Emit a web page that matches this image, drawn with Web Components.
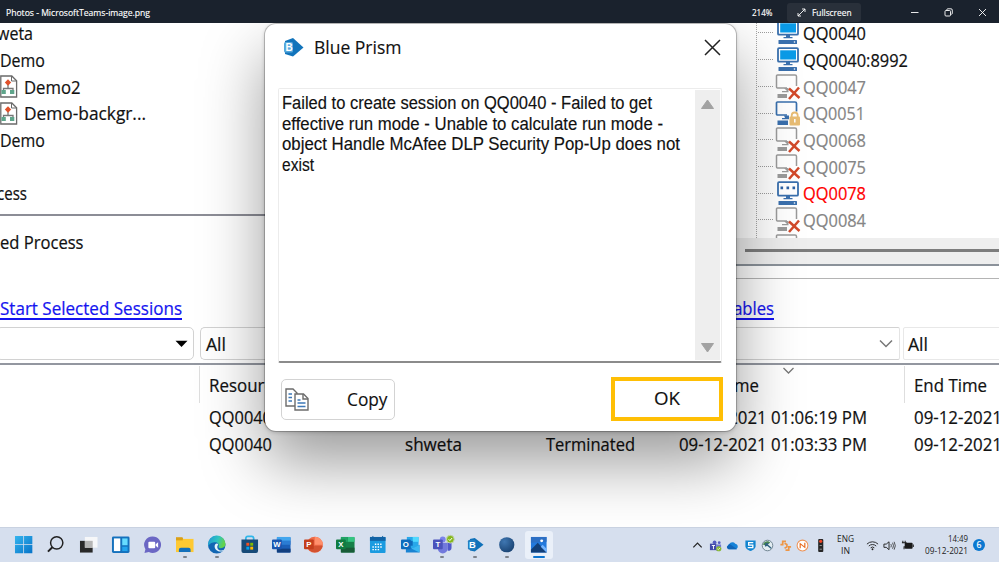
<!DOCTYPE html>
<html lang="en">
<head>
<meta charset="utf-8">
<title>Photos - MicrosoftTeams-image.png</title>
<style>
    body {
        margin: 0;
        width: 999px;
        height: 562px;
        overflow: hidden;
        background: #fff;
        font-family: "Open Sans", "Noto Sans", sans-serif;
        color: #111;
    }
</style>
</head>
<body>
<photos-app></photos-app>

<script>
// Text squeezed or stretched to the width given in "w"
class FitText extends HTMLElement {
    constructor() {
        super();
        this.attachShadow({ mode: 'open' });
    }

    connectedCallback() {
        const w = parseFloat(this.getAttribute('w'));
        this.shadowRoot.innerHTML = `
            <style>
                :host { display: block; width: ${w}px; white-space: nowrap; flex: none; }
                span { display: inline-block; transform-origin: 0 50%; text-decoration: inherit; }
            </style>
            <span><slot></slot></span>
        `;
        const span = this.shadowRoot.querySelector('span');
        const natural = span.getBoundingClientRect().width;
        if (natural) {
            span.style.transform = `scaleX(${w / natural})`;
        }
    }
}

class TitleBar extends HTMLElement {
    constructor() {
        super();
        this.attachShadow({ mode: 'open' });
    }

    connectedCallback() {
        this.shadowRoot.innerHTML = `
            <style>
                :host {
                    display: flex;
                    align-items: center;
                    height: 23px;
                    box-sizing: border-box;
                    padding: 2px 12px 0 6px;
                    background: #1a222d;
                    color: #fff;
                    font-size: 8.8px;
                    line-height: 20px;
                    -webkit-text-stroke: .15px;
                }
                .grow { flex: 1; }
                .full {
                    display: flex;
                    align-items: center;
                    gap: 6px;
                    width: 74px;
                    height: 19px;
                    box-sizing: border-box;
                    padding-left: 10px;
                    margin: 0 49px 0 15px;
                    background: #29303a;
                    border-radius: 3px;
                }
                svg { display: block; fill: none; stroke: #fff; stroke-width: .9; }
                .win { display: flex; gap: 25px; }
            </style>
            <fit-text w="144">Photos - MicrosoftTeams-image.png</fit-text>
            <div class="grow"></div>
            <fit-text w="20.5">214%</fit-text>
            <div class="full">
                <svg width="9" height="9"><path d="M1 8L8 1M5 1h3v3M1 5v3h3"/></svg>
                <fit-text w="39.5">Fullscreen</fit-text>
            </div>
            <div class="win">
                <svg width="9" height="9"><path d="M1 4.5h7.5"/></svg>
                <svg width="9" height="9"><rect x="1" y="2.5" width="5.5" height="5.5" rx="1"/><path d="M2.8 2.3V1.8a1 1 0 0 1 1-1H7a1.3 1.3 0 0 1 1.3 1.3v3.200a1 1 0 0 1-1 1"/></svg>
                <svg width="9" height="9"><path d="M1 1l7 7M8 1L1 8"/></svg>
            </div>
        `;
    }
}

class ProcessItem extends HTMLElement {
    constructor() {
        super();
        this.attachShadow({ mode: 'open' });
    }

    connectedCallback() {
        const icon = this.hasAttribute('icon') ? `
            <svg width="18" height="23" viewBox="0 0 18 23">
                <path d="M.8 1h11l4.800 4.800V22H.8z" fill="#fff" stroke="#6a6a6a" stroke-width="1.300"/>
                <path d="M11.500 1v5h5" fill="none" stroke="#6a6a6a"/>
                <path d="M8 8v5.500M3.500 16v-2.500H13V16" fill="none" stroke="#777" stroke-width="1.300"/>
                <path d="M8 4.200L11.200 7.500 8 10.800 4.800 7.500z" fill="#e0512b"/>
                <rect x="1.500" y="15" width="4.300" height="4" fill="#5fa58b"/>
                <rect x="10" y="15" width="4.300" height="4" fill="#5fa58b"/>
            </svg>` : '';
        this.shadowRoot.innerHTML = `
            <style>
                :host { display: flex; align-items: center; gap: 6px; height: 26.7px; font-size: 17.5px; line-height: 26px; }
                svg { display: block; flex: none; margin-top: -2px; }
                ::slotted(*) { margin-top: -1.500px; }
            </style>
            ${icon}<slot></slot>
        `;
    }
}

const CROSS = '<path d="M14 14.500L24.500 24M24 13.500L14 25" stroke="#d2492a" stroke-width="2.500"/>';
const MACHINE_ICONS = {
    online: `
        <rect x="3" y="1.200" width="20" height="13.500" rx="1" fill="#fff" stroke="#3a70ae" stroke-width="1.800"/>
        <rect x="5.200" y="3.300" width="15.800" height="9.200" fill="#0a9be8"/>
        <path d="M11 15h4v2h2.500v1.300H8.500V17H11z" fill="#3a70ae"/>
        <rect x="3.500" y="20" width="18.500" height="4" rx=".6" fill="#3a70ae"/><circle cx="19.500" cy="22" r=".8" fill="#fff"/>`,
    busy: `
        <rect x="3" y="1.200" width="20" height="13.500" rx="1" fill="#fff" stroke="#3a70ae" stroke-width="1.800"/>
        <path d="M5.500 5.500h2.600v2.800H5.500zM11.500 5.500h2.600v2.800h-2.600zM17.500 5.500h2.600v2.800h-2.600z" fill="#2d62a5"/>
        <path d="M11 15h4v2h2.500v1.300H8.500V17H11z" fill="#3a70ae"/>
        <rect x="3.500" y="20" width="18.500" height="4" rx=".6" fill="#3a70ae"/><circle cx="19.500" cy="22" r=".8" fill="#fff"/>`,
    offline: `
        <path d="M5 14H2.500a1 1 0 0 1-1-1V2a1 1 0 0 1 1-1H20a1.500 1.500 0 0 1 1.500 1.500v9.500" fill="none" stroke="#9b9b9b" stroke-width="1.500"/>
        <path d="M5 14h7" stroke="#9b9b9b" stroke-width="1.500"/>
        <path d="M9 14l3 3H7v1.200h6.500V14z" fill="#9b9b9b"/><rect x="2.500" y="20" width="9.500" height="4" fill="#9b9b9b"/>` + CROSS,
    locked: `
        <path d="M12 14H2.500a1 1 0 0 1-1-1V2a1 1 0 0 1 1-1H20a1.500 1.500 0 0 1 1.500 1.500v8" fill="none" stroke="#3a70ae" stroke-width="1.700"/>
        <path d="M9 14.500h5v3.700H7V17h3z" fill="#3a70ae"/><rect x="2.500" y="19.500" width="10.500" height="4.500" fill="#3a70ae"/>
        <path d="M16.700 16v-1.500a3 3 0 0 1 6 0V16" fill="none" stroke="#e8bd74" stroke-width="1.800"/>
        <rect x="14.500" y="15.500" width="10.500" height="9" rx="1" fill="#e8bd74"/><path d="M19.800 18v3.500" stroke="#fff" stroke-width="1.500"/>`
};

class MachineItem extends HTMLElement {
    constructor() {
        super();
        this.attachShadow({ mode: 'open' });
    }

    connectedCallback() {
        const state = this.getAttribute('state');
        const colors = { offline: '#858585', locked: '#858585', busy: '#ff0000' };
        this.shadowRoot.innerHTML = `
            <style>
                :host {
                    display: flex;
                    align-items: center;
                    height: 26.7px;
                    font-size: 17.5px;
                    line-height: 26px;
                    color: ${colors[state] || '#111'};
                }
                .branch { width: 15px; margin: 0 1.500px 2px 1px; border-top: 1.500px dotted #9d9d9d; }
                svg { display: block; flex: none; margin: -1px 2.500px 0 0; }
                ::slotted(*) { margin-top: -1.500px; }
            </style>
            <div class="branch"></div>
            <svg width="26" height="26" viewBox="0 0 26 26">${MACHINE_ICONS[state]}</svg>
            <slot></slot>
        `;
    }
}

class ComboBox extends HTMLElement {
    constructor() {
        super();
        this.attachShadow({ mode: 'open' });
    }

    connectedCallback() {
        const kind = this.getAttribute('arrow');
        const arrow = kind === 'solid'
            ? '<svg width="13" height="8"><path d="M.5 .8h12L6.500 7z" fill="#000"/></svg>'
            : kind === 'line' ? '<svg width="14" height="9"><path d="M1 1.500l6 6 6-6" fill="none" stroke="#777" stroke-width="1.500"/></svg>' : '';
        this.shadowRoot.innerHTML = `
            <style>
                :host {
                    display: flex;
                    align-items: center;
                    justify-content: space-between;
                    box-sizing: border-box;
                    height: 33px;
                    padding: 0 6px 0 5px;
                    border: 1.500px solid #d2d2d2;
                    border-radius: 5px;
                    background: #fff;
                    font-size: 17.5px;
                    line-height: 26px;
                }
                :host([flat]) { border-color: #e8e8e8; border-radius: 2px; padding-left: 4px; }
                :host([arrow=solid]) { padding-right: 5px; }
                :host([arrow=line]) { border-right-color: #e4e4e4; border-radius: 5px 2px 2px 5px; }
                svg { display: block; }
            </style>
            <div><slot></slot></div>${arrow}
        `;
    }
}

class ControlRoom extends HTMLElement {
    constructor() {
        super();
        this.attachShadow({ mode: 'open' });
    }

    connectedCallback() {
        this.shadowRoot.innerHTML = `
            <style>
                :host { display: block; height: 504px; overflow: hidden; background: #fff; font-size: 17.5px; line-height: 26px; -webkit-text-stroke: .2px; }
                .top { display: grid; grid-template-columns: 736px 263px; height: 256px; }
                .processes { height: 193px; box-sizing: border-box; border-bottom: 2px solid #8c8d96; overflow: hidden; }
                .processes > :first-child, .tree > :first-child { margin-top: -2.400px; }
                .label { padding-top: 13px; }
                .cut { margin-left: -3px; }
                .machines { display: flex; flex-direction: column; }
                .tree { height: 214.500px; box-sizing: border-box; margin-left: 20px; border-left: 1.500px dotted #a5a5a5; overflow: hidden; }
                .track { height: 28px; background: #eee; box-sizing: border-box; padding: 11px 0 0 9px; border-bottom: 2px solid #8b929a; }
                .thumb { height: 3px; background: #7d7d7d; }
                .gap { height: 12px; border-bottom: 1.500px solid #b4b4b4; }
                .links { display: flex; align-items: center; height: 48px; padding-top: 10px; box-sizing: border-box; color: #1414f0; }
                .links fit-text { text-decoration: underline 1.500px; text-underline-offset: 3px; }
                .links fit-text + fit-text { margin-left: 521px; }
                .filters { display: grid; grid-template-columns: 198px 700px 120px; gap: 6px; margin-left: -4px; padding-bottom: 3px; border-bottom: 2px solid #9397a0; }
                .filters [flat] { margin-left: -3px; }
                .head, .row { display: grid; grid-template-columns: 199px 196px 141px 133px 235px 95px; align-items: center; }
                .head { height: 39px; }
                .head > div { height: 37px; display: flex; align-items: center; box-sizing: border-box; padding-left: 10px; }
                .head .sep { border-left: 1.500px solid #dedede; padding-left: 9px; }
                .row { height: 26.7px; }
                .row > * { margin-left: 10px; }
                .start { position: relative; }
                .start svg { position: absolute; left: 113px; top: 1px; }
            </style>
            <div class="top">
                <div>
                    <div class="processes">
                        <process-item class="cut"><fit-text w="36">weta</fit-text></process-item>
                        <process-item><fit-text w="45">Demo</fit-text></process-item>
                        <process-item icon><fit-text w="56.500">Demo2</fit-text></process-item>
                        <process-item icon><fit-text w="122">Demo-backgr...</fit-text></process-item>
                        <process-item><fit-text w="45">Demo</fit-text></process-item>
                        <process-item></process-item>
                        <process-item class="cut"><fit-text w="30">cess</fit-text></process-item>
                    </div>
                    <div class="label"><fit-text w="83.500">ed Process</fit-text></div>
                </div>
                <div class="machines">
                    <div class="tree">
                        <machine-item state="online"><fit-text w="63">QQ0040</fit-text></machine-item>
                        <machine-item state="online"><fit-text w="105">QQ0040:8992</fit-text></machine-item>
                        <machine-item state="offline"><fit-text w="63">QQ0047</fit-text></machine-item>
                        <machine-item state="locked"><fit-text w="62">QQ0051</fit-text></machine-item>
                        <machine-item state="offline"><fit-text w="63">QQ0068</fit-text></machine-item>
                        <machine-item state="offline"><fit-text w="63">QQ0075</fit-text></machine-item>
                        <machine-item state="busy"><fit-text w="63">QQ0078</fit-text></machine-item>
                        <machine-item state="offline"><fit-text w="63">QQ0084</fit-text></machine-item>
                        <machine-item state="offline"></machine-item>
                    </div>
                    <div class="track"><div class="thumb"></div></div>
                    <div class="gap"></div>
                </div>
            </div>
            <div class="links">
                <fit-text w="182">Start Selected Sessions</fit-text>
                <fit-text w="71">Variables</fit-text>
            </div>
            <div class="filters">
                <combo-box arrow="solid"></combo-box>
                <combo-box arrow="line"><fit-text w="20">All</fit-text></combo-box>
                <combo-box flat><fit-text w="20">All</fit-text></combo-box>
            </div>
            <div class="head">
                <div></div>
                <div class="sep"><fit-text w="73">Resource</fit-text></div>
                <div></div>
                <div></div>
                <div class="start">
                    <fit-text w="80">Start Time</fit-text>
                    <svg width="13" height="8"><path d="M1.500 1l5 5 5-5" fill="none" stroke="#777" stroke-width="1.300"/></svg>
                </div>
                <div class="sep"><fit-text w="73">End Time</fit-text></div>
            </div>
            <div class="row">
                <span></span>
                <fit-text w="63">QQ0040</fit-text>
                <span></span>
                <span></span>
                <fit-text w="188">09-12-2021 01:06:19 PM</fit-text>
                <fit-text w="88">09-12-2021</fit-text>
            </div>
            <div class="row">
                <span></span>
                <fit-text w="63">QQ0040</fit-text>
                <fit-text w="57">shweta</fit-text>
                <fit-text w="89">Terminated</fit-text>
                <fit-text w="188">09-12-2021 01:03:33 PM</fit-text>
                <fit-text w="88">09-12-2021</fit-text>
            </div>
        `;
    }
}

class ErrorDialog extends HTMLElement {
    constructor() {
        super();
        this.attachShadow({ mode: 'open' });
    }

    connectedCallback() {
        this.shadowRoot.innerHTML = `
            <style>
                :host {
                    display: flex;
                    flex-direction: column;
                    box-sizing: border-box;
                    width: 471px;
                    height: 407px;
                    padding: 0 13px 10px;
                    background: #fff;
                    border-radius: 11px;
                    box-shadow: 0 0 0 1px rgba(0,0,0,.2), 0 1px 4px rgba(0,0,0,.22), 0 31px 64px rgba(0,0,0,.4);
                    -webkit-text-stroke: .15px;
                }
                header { display: flex; align-items: center; height: 46px; padding: 0 2px 18px 5px; font-size: 18.5px; line-height: 26px; }
                header fit-text { margin: 0 auto 0 10px; }
                svg { display: block; flex: none; }
                .box {
                    display: flex;
                    justify-content: space-between;
                    box-sizing: border-box;
                    height: 275px;
                    width: 444px;
                    border: 1.500px solid #ececec;
                    border-bottom: 2px solid #8b8b8b;
                    border-radius: 2px;
                }
                .msg { padding: 4px 0 0 3px; font: 17.500px/20.500px "Liberation Sans", Arial, sans-serif; }
                .bar {
                    display: flex;
                    flex-direction: column;
                    justify-content: space-between;
                    align-items: center;
                    width: 25px;
                    height: 270px;
                    box-sizing: border-box;
                    padding: 9px 0 7px;
                    margin: 1px 1px 0 0;
                    background: #eee;
                }
                footer { display: flex; justify-content: space-between; align-items: flex-start; margin-top: 14px; font-size: 18.5px; line-height: 26px; }
                footer fit-text { margin-top: -2px; }
                .copy {
                    display: flex;
                    align-items: center;
                    justify-content: space-between;
                    box-sizing: border-box;
                    width: 114px;
                    height: 41px;
                    margin: 2px 0 0 3px;
                    padding: 0 7px 0 3px;
                    border: 1.500px solid #d3d3d3;
                    border-radius: 5px;
                }
                .ok {
                    display: flex;
                    align-items: center;
                    justify-content: center;
                    box-sizing: border-box;
                    width: 112px;
                    height: 44px;
                    border: 4px solid #ffbf05;
                }
            </style>
            <header>
                <svg width="21" height="19" viewBox="0 0 21 19">
                    <path d="M10 0l10.500 9.500L10 18.500 2 16V3z" fill="#1274bb"/>
                    <rect x="1" y="4" width="9" height="10.500" rx="1.500" fill="#56a7db"/>
                    <text x="2.500" y="12.800" font-family="Liberation Sans" font-size="10" font-weight="700" fill="#fff">B</text>
                </svg>
                <fit-text w="87.500">Blue Prism</fit-text>
                <svg width="17" height="17"><path d="M1 1l15 15M16 1L1 16" stroke="#222" stroke-width="1.500"/></svg>
            </header>
            <div class="box">
                <div class="msg">
                    <fit-text w="370">Failed to create session on QQ0040 - Failed to get</fit-text>
                    <fit-text w="381">effective run mode - Unable to calculate run mode -</fit-text>
                    <fit-text w="398">object Handle McAfee DLP Security Pop-Up does not</fit-text>
                    <fit-text w="32">exist</fit-text>
                </div>
                <div class="bar">
                    <svg width="13" height="10"><path d="M6.500 1L12.500 9.500H.5z" fill="#a2a2a2" stroke="#a2a2a2" stroke-linejoin="round"/></svg>
                    <svg width="13" height="10"><path d="M6.500 9L12.500 .5H.5z" fill="#a2a2a2" stroke="#a2a2a2" stroke-linejoin="round"/></svg>
                </div>
            </div>
            <footer>
                <div class="copy">
                    <svg width="24" height="23" viewBox="0 0 24 23" fill="#fff" stroke="#6c6c6c" stroke-width="1.400">
                        <path d="M1 1h7l4 4v13H1z"/><path d="M10 6h8.500l4.500 4.500V22H10z"/><path d="M18 6v5h5" fill="none"/>
                        <path d="M3.500 6h3.500M3.500 9.500H7M3.500 13H7M12.500 12h3M12.500 15h8M12.500 18.500h8" stroke="#3d78b8"/>
                    </svg>
                    <fit-text w="40.500">Copy</fit-text>
                </div>
                <div class="ok"><fit-text w="26">OK</fit-text></div>
            </footer>
        `;
    }
}

// Square letter badge with a coloured sheet behind, used by the Office icons
const letter = (char, color) => `
    <rect x="0" y="4.500" width="10" height="10" rx="1" fill="${color}"/>
    <text x="5" y="12.400" text-anchor="middle" font-family="Liberation Sans" font-size="8" font-weight="700" fill="#fff">${char}</text>`;

const APP_ICONS = {
    start: `<defs><linearGradient id="g" x1="0" y1="0" x2="1" y2="1"><stop offset="0" stop-color="#35b5ee"/><stop offset="1" stop-color="#0673c8"/></linearGradient></defs>
        <path d="M1 1h8.500v8.500H1zM10.300 1h8.500v8.500h-8.500zM1 10.300h8.500v8.500H1zM10.300 10.300h8.500v8.500h-8.500z" fill="url(#g)"/>`,
    search: '<circle cx="11" cy="8" r="6.300" fill="none" stroke="#202020" stroke-width="1.500"/><path d="M6.500 12.500L2 17" stroke="#202020" stroke-width="2"/>',
    taskview: '<rect x="1" y="6" width="13" height="12" fill="#292929"/><rect x="6" y="2" width="13" height="11" fill="#fafafa" opacity=".9"/><rect x="6" y="6" width="8" height="7" fill="#b5b5b5"/>',
    widgets: '<rect x="1" y="1.500" width="18" height="17" rx="1.500" fill="#1471bd"/><path d="M3 3.500h6.500v13H3z" fill="#fff"/><path d="M11.500 3.500h5.500v7h-5.500z" fill="#67dcff"/><path d="M11.500 12h5.500v4.500h-5.500z" fill="#22a4ed"/>',
    chat: '<path d="M10 1.500a8.500 8.500 0 1 1-4 16L1.500 18.500l1-4A8.500 8.500 0 0 1 10 1.500z" fill="#6b67c4"/><rect x="5.500" y="7" width="7" height="6.500" rx="1" fill="#fff"/><path d="M13 9.500L15.500 7.500v5.500L13 11z" fill="#fff"/>',
    explorer: '<path d="M1 2.500h6l2 2H1z" fill="#d99b0b"/><path d="M1 4h18v13.500H1z" fill="#fec933"/><path d="M1 2.500h7v3H1z" fill="#dba016"/><path d="M4 17.500V15a2 2 0 0 1 2-2h8a2 2 0 0 1 2 2v2.500z" fill="#126fbb"/>',
    edge: `<defs><linearGradient id="e" x1="0" y1="0" x2="1" y2=".3"><stop offset="0" stop-color="#1c93d8"/><stop offset=".6" stop-color="#2fc4c0"/><stop offset="1" stop-color="#63d34a"/></linearGradient></defs>
        <circle cx="10" cy="10" r="9" fill="#1266b3"/><path d="M1 10a9 9 0 0 1 18-1c0 3-2 4.500-5 4.500-2 0-2.500-1-2-2 .6-1.500-.5-4-3.500-4S2 9 1 12z" fill="url(#e)"/>
        <path d="M8.500 9.500c-2 3 .5 8 6.500 7.500 1-.1 2-.8 2.500-1.500-3 1-5.500.2-6.500-1.500-.8-1.500-.5-3 .5-4-.5-1.500-2-1.500-3-.5z" fill="#e6f4fb"/>`,
    store: '<path d="M6 5V3a2 2 0 0 1 2-1.500h4A2 2 0 0 1 14 3v2" fill="none" stroke="#2fb6ea" stroke-width="1.800"/><path d="M1.500 4.500h17v12a2 2 0 0 1-2 2h-13a2 2 0 0 1-2-2z" fill="#174a78"/><path d="M6.500 8h3v3h-3z" fill="#f25022"/><path d="M10.500 8h3v3h-3z" fill="#7fba00"/><path d="M6.500 12h3v3h-3z" fill="#00a4ef"/><path d="M10.500 12h3v3h-3z" fill="#ffb900"/>',
    word: '<rect x="5" y="2" width="14" height="16" rx="1" fill="#1b5fb8"/><path d="M5 2h14v4H5z" fill="#41a5ee"/><path d="M5 6h14v4H5z" fill="#2b7cd3"/><path d="M5 14h14v4H5z" fill="#123f7f"/>' + letter('W', '#1a56b0'),
    powerpoint: '<circle cx="11" cy="10" r="8.300" fill="#ee6a47"/><path d="M11 1.700a8.300 8.300 0 0 1 8.300 8.300H11z" fill="#ff8f6b"/><path d="M3 11h16.300A8.300 8.300 0 0 1 3 11z" fill="#d35230"/>' + letter('P', '#c43e1c'),
    excel: '<rect x="5" y="2" width="14" height="16" rx="1" fill="#168048"/><path d="M12 2h7v5h-7z" fill="#35c481"/><path d="M5 2h7v5H5z" fill="#21a366"/><path d="M5 13h14v5H5z" fill="#185c37"/>' + letter('X', '#107c41'),
    calendar: '<rect x="2" y="2" width="16" height="16.500" rx="1" fill="#1b9be0"/><path d="M2 2h16v4H2z" fill="#1263a5"/><path d="M7 9.500h8M4.500 12.300h10.500M4.500 15h8" stroke="#fff" stroke-width="1.500" stroke-dasharray="1.500 1.200"/><path d="M5 1v3M15 1v3" stroke="#1263a5"/>',
    outlook: '<rect x="6" y="2" width="12" height="12" fill="#28a8ea"/><path d="M12 2h6v5h-6z" fill="#50d9ff"/><path d="M6 6h6v5H6z" fill="#0f6abc"/><path d="M5 10l7 4 7-4v8H5z" fill="#1a83d2"/><path d="M19 10v8l-8-4z" fill="#3cb8f2"/>' + letter('O', '#0f6cbd'),
    teams: '<circle cx="10" cy="4.500" r="3" fill="#7b83eb"/><path d="M5 8h10v6a5 5 0 0 1-10 0z" fill="#7279dc"/><path d="M15 8h4v5a3 3 0 0 1-4 3z" fill="#5059c9"/>' + letter('T', '#4b53bc') + '<circle cx="17.800" cy="4.300" r="4" fill="#85b81c" stroke="#c4d2bb"/><path d="M16 4.300l1.300 1.400 2.300-2.600" fill="none" stroke="#fff"/>',
    prism: '<path d="M10 3l9 7-9 7-5-1V4z" fill="#1071b9"/><rect x="3" y="5" width="8" height="10" rx="1.500" fill="#237fc2"/><text x="4" y="13.500" font-family="Liberation Sans" font-size="9.500" font-weight="700" fill="#fff">B</text>',
    sphere: '<defs><radialGradient id="s" cx=".35" cy=".3" r=".8"><stop offset="0" stop-color="#3f77b2"/><stop offset="1" stop-color="#17406f"/></radialGradient></defs><circle cx="10" cy="10" r="7.800" fill="url(#s)"/>',
    photos: '<rect x="2" y="2" width="16" height="16" fill="#2379dc"/><path d="M2 2h16v5L2 8z" fill="#2c6fc4"/><path d="M2 15l7-7 9 9.500V18H2z" fill="#123f78"/><path d="M12 12l2-2 4 4v4z" fill="#73b4ff"/><circle cx="13" cy="6" r="1.500" fill="#fff"/>'
};

const TRAY_ICONS = {
    up: '<path d="M2.500 9L7 4.500 11.500 9" fill="none" stroke="#222" stroke-width="1.300"/>',
    teams: '<circle cx="6" cy="3.500" r="2" fill="#555bc2"/><circle cx="11" cy="4" r="1.500" fill="#555bc2"/><rect x="1" y="5" width="7" height="7" fill="#4149a8"/><path d="M8 6h5v4l-2 3H8z" fill="#7178d3"/><path d="M3 7h3.500M4.800 7v4" stroke="#fff"/><circle cx="10.500" cy="10.500" r="2.800" fill="#88b735"/><path d="M9 10.500l1 1 2-2" stroke="#fff" fill="none" stroke-width=".8"/>',
    cloud: '<path d="M3.500 11a3 3 0 0 1 0-5.500A4 4 0 0 1 10 5a3.200 3.200 0 0 1 1 6z" fill="#1683d8"/><path d="M1 8l3-2.500L12 11H3.500A2.500 2.500 0 0 1 1 8z" fill="#0f65b8"/>',
    shield: '<path d="M1.500 1.500h11v6c0 3-3 4.500-5.500 5.500-2.500-1-5.500-2.500-5.500-5.500z" fill="#1285d0"/><path d="M10 4H5v2.700h4.500v2.600H4" fill="none" stroke="#fff" stroke-width="1.400"/>',
    globe: '<circle cx="7" cy="7" r="5.700" fill="#e3edf2" stroke="#6a7e8b"/><path d="M2 6c2-5 7-4 8-2L5 7z" fill="#4a8655"/><path d="M5 5l6 5M5 5v3M5 5h3" stroke="#31627f" stroke-width="1.500" fill="none"/>',
    sync: '<path d="M7.500 2.500H4v3.500H1.500M6 4.500l2.500 1.500v2.500L6 10M7 12h3.500V8.500H13" fill="none" stroke="#ee9645" stroke-width="1.800"/>',
    note: '<circle cx="7" cy="7" r="5.800" fill="#fff" stroke="#ee9154" stroke-width="1.100"/><path d="M4.500 10V5l5 4V4" fill="none" stroke="#e86d23" stroke-width="1.300"/>',
    lamp: '<rect x="4.500" y="0" width="5.500" height="14" rx="1" fill="#262626"/><circle cx="7.200" cy="2.500" r="1.700" fill="#f34525"/><path d="M6 7h2.500M6 11h2.500" stroke="#999"/>',
    wifi: '<path d="M1 5.500a8.500 8.500 0 0 1 12 0M3 7.600a5.700 5.700 0 0 1 8 0M5 9.500a3 3 0 0 1 4 0" fill="none" stroke="#222"/><circle cx="7" cy="11" r="1" fill="#222"/>',
    sound: '<path d="M1 5.500h2.500L6.500 3v8.500L3.500 9H1z" fill="none" stroke="#222"/><path d="M8.500 5.500q1 1.700 0 3.500M10.300 4q2 3.200 0 6.500M12 3q2.500 4.300 0 8.500" fill="none" stroke="#222" stroke-width=".8"/>',
    battery: '<rect x="4" y="4" width="8.500" height="6.500" rx="1" fill="#1a1a1a"/><path d="M13.200 6v2.500M1 4h4.500v2.500a2 2 0 0 1-2.200 2V11M2 2v2M4.500 2v2" fill="none" stroke="#1a1a1a" stroke-width="1.100"/>'
};

class AppIcon extends HTMLElement {
    constructor() {
        super();
        this.attachShadow({ mode: 'open' });
    }

    connectedCallback() {
        this.shadowRoot.innerHTML = `
            <style>
                :host {
                    display: flex;
                    flex-direction: column;
                    align-items: center;
                    box-sizing: border-box;
                    width: 28px;
                    height: 28px;
                    padding-top: 4px;
                    border-radius: 3px;
                }
                :host([active]) { background: #eaf0f9; }
                svg { display: block; overflow: visible; flex: none; }
                .mark { width: 4px; height: 2px; margin-top: 1.500px; border-radius: 1px; }
                :host([open]) .mark { background: #7d828a; }
                :host([active]) .mark { width: 12px; background: #0c74cf; }
            </style>
            <svg width="19.500" height="19.500" viewBox="0 0 20 20">${APP_ICONS[this.getAttribute('name')]}</svg>
            <div class="mark"></div>
        `;
    }
}

class TrayIcon extends HTMLElement {
    constructor() {
        super();
        this.attachShadow({ mode: 'open' });
    }

    connectedCallback() {
        this.shadowRoot.innerHTML = `
            <style>
                :host { display: block; width: 13px; height: 13px; }
                svg { display: block; }
            </style>
            <svg width="13" height="13" viewBox="0 0 14 14">${TRAY_ICONS[this.getAttribute('name')]}</svg>
        `;
    }
}

class TaskBar extends HTMLElement {
    constructor() {
        super();
        this.attachShadow({ mode: 'open' });
    }

    connectedCallback() {
        const running = ['explorer', 'edge', 'teams', 'prism', 'sphere'];
        const apps = Object.keys(APP_ICONS).map(name =>
            `<app-icon name="${name}" ${running.includes(name) ? 'open' : ''} ${name === 'photos' ? 'active' : ''}></app-icon>`).join('');
        const tray = names => names.map(name => `<tray-icon name="${name}"></tray-icon>`).join('');
        this.shadowRoot.innerHTML = `
            <style>
                :host {
                    display: flex;
                    align-items: center;
                    justify-content: space-between;
                    height: 35px;
                    box-sizing: border-box;
                    padding: 0 14px 0 10px;
                    background: #d6dfee;
                    border-top: 1px solid #c9d2e1;
                    font-size: 8.800px;
                    line-height: 12px;
                    color: #222;
                }
                .apps { display: flex; gap: 4.200px; }
                .tray { display: flex; align-items: center; }
                .group { display: flex; gap: 4.500px; }
                .lang { display: flex; flex-direction: column; align-items: center; margin: 0 12px 0 10px; }
                .clock { display: flex; flex-direction: column; align-items: flex-end; margin: 0 5px 0 11.500px; }
                .badge { width: 12px; height: 12px; border-radius: 50%; background: #0b78d0; color: #fff; text-align: center; font-size: 8.500px; line-height: 12px; -webkit-text-stroke: .2px; }
            </style>
            <div class="apps">${apps}</div>
            <div class="tray">
                <div class="group">${tray(['up', 'teams', 'cloud', 'shield', 'globe', 'sync', 'note', 'lamp'])}</div>
                <div class="lang"><fit-text w="17">ENG</fit-text><fit-text w="9">IN</fit-text></div>
                <div class="group">${tray(['wifi', 'sound', 'battery'])}</div>
                <div class="clock"><fit-text w="20">14:49</fit-text><fit-text w="43">09-12-2021</fit-text></div>
                <div class="badge">6</div>
            </div>
        `;
    }
}

class PhotosApp extends HTMLElement {
    constructor() {
        super();
        this.attachShadow({ mode: 'open' });
    }

    connectedCallback() {
        this.shadowRoot.innerHTML = `
            <style>
                :host { display: block; height: 562px; }
                .photo { position: relative; height: 504px; overflow: hidden; }
                error-dialog { position: absolute; left: 265px; top: 1px; }
            </style>
            <title-bar></title-bar>
            <div class="photo">
                <control-room></control-room>
                <error-dialog></error-dialog>
            </div>
            <task-bar></task-bar>
        `;
    }
}

customElements.define('fit-text', FitText);
customElements.define('title-bar', TitleBar);
customElements.define('process-item', ProcessItem);
customElements.define('machine-item', MachineItem);
customElements.define('combo-box', ComboBox);
customElements.define('control-room', ControlRoom);
customElements.define('error-dialog', ErrorDialog);
customElements.define('app-icon', AppIcon);
customElements.define('tray-icon', TrayIcon);
customElements.define('task-bar', TaskBar);
customElements.define('photos-app', PhotosApp);
</script>
</body>
</html>
